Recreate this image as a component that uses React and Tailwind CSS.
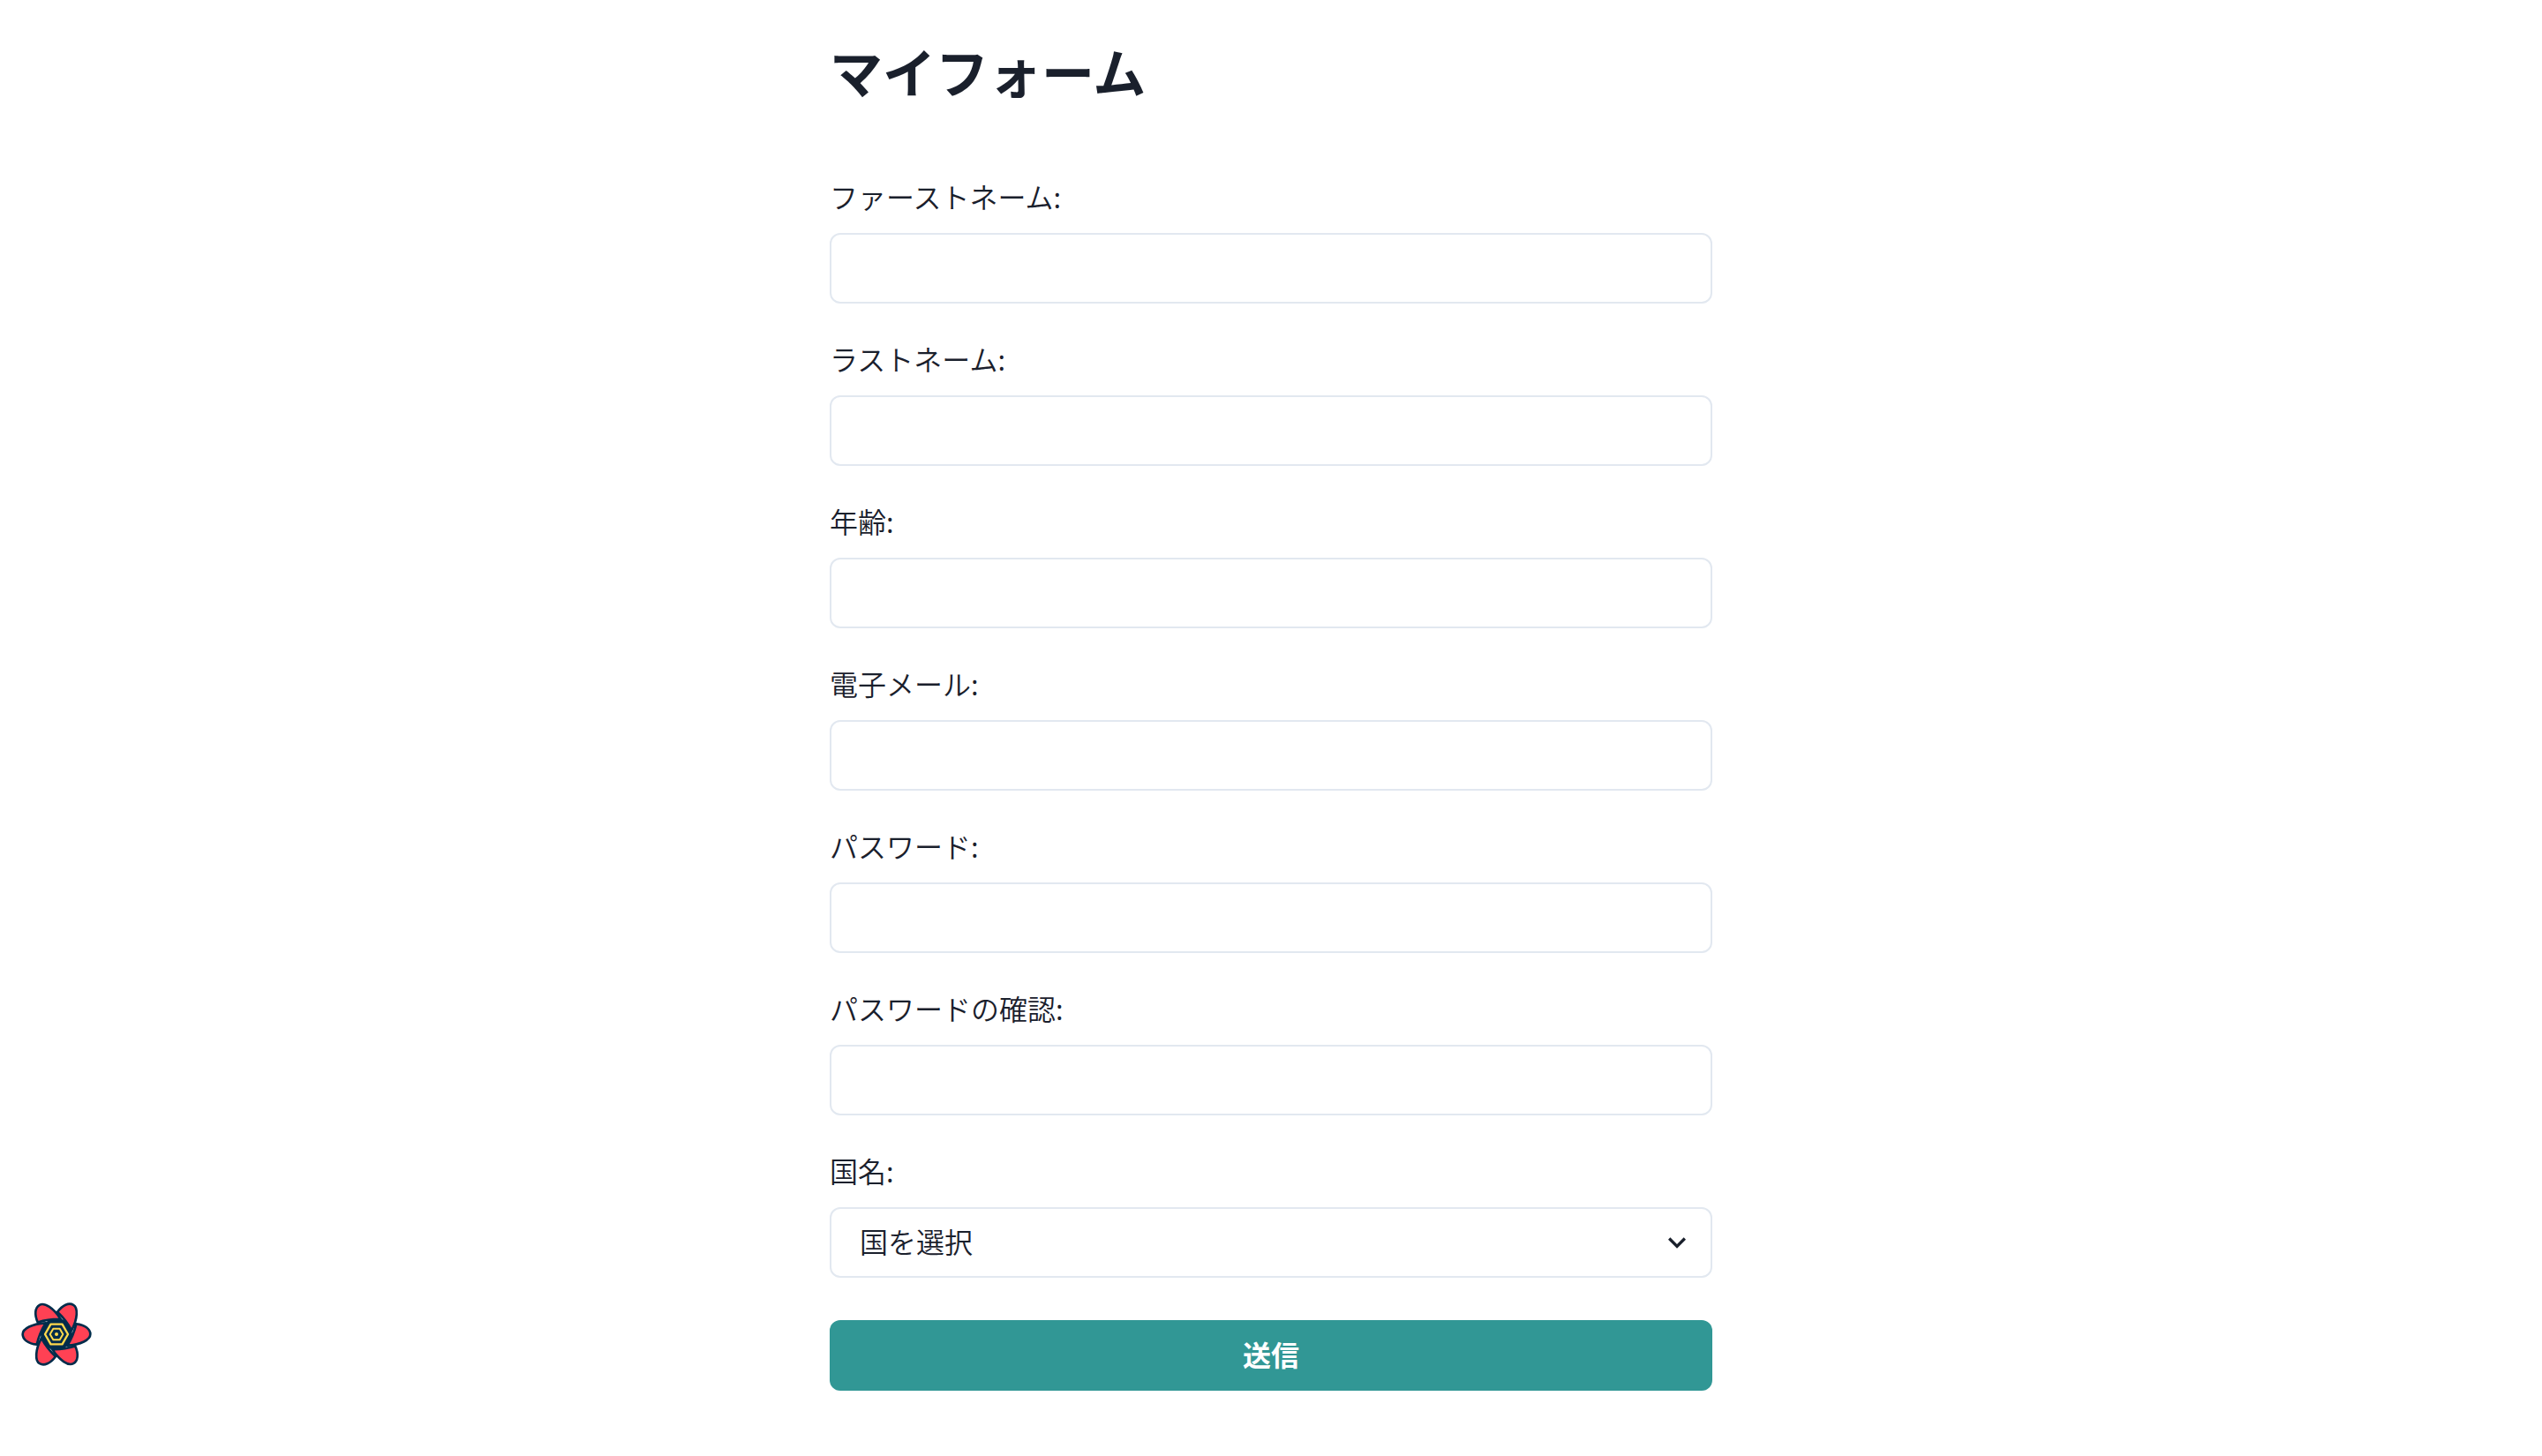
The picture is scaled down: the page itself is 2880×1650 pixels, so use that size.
const fields = [
  { id: 'firstName', label: 'ファーストネーム:', type: 'text' },
  { id: 'lastName', label: 'ラストネーム:', type: 'text' },
  { id: 'age', label: '年齢:', type: 'number' },
  { id: 'email', label: '電子メール:', type: 'email' },
  { id: 'password', label: 'パスワード:', type: 'password' },
  { id: 'passwordConfirm', label: 'パスワードの確認:', type: 'password' },
];

function FlowerLogo() {
  return (
    <svg viewBox="-120 -120 240 240" className="size-20" aria-hidden="true">
      <circle r="54" fill="#002C4B" />
      <g fill="#FF4154" stroke="#002C4B" strokeWidth="8" strokeLinejoin="round">
        {[0, 60, 120, 180, 240, 300].map((angle) => (
          <path
            key={angle}
            d="M37 38Q58 4 67 -35C96 -32 115 -18 115 0C115 19 82 36 37 38Z"
            transform={`rotate(${angle})`}
          />
        ))}
      </g>
      <path d="M50 0L25 43.3H-25L-50 0L-25 -43.3H25Z" fill="#002C4B" />
      <g fill="none" stroke="#FFD94C" strokeLinejoin="round">
        <path d="M39 0L19.5 34H-19.5L-39 0L-19.5 -34H19.5Z" strokeWidth="7" />
        <path d="M22 0L11 19H-11L-22 0L-11 -19H11Z" strokeWidth="6" />
      </g>
      <circle r="6" fill="#FFD94C" />
    </svg>
  );
}

function Field({ id, label, children }) {
  return (
    <div className="flex flex-col gap-5">
      <label htmlFor={id} className="text-[32px] leading-[44px]">
        {label}
      </label>
      {children}
    </div>
  );
}

export default function App() {
  return (
    <div className="min-h-screen bg-white font-['Noto_Sans_CJK_JP',sans-serif] font-[350] text-[#1A202C]">
      <main className="mx-auto flex w-full max-w-[1000px] flex-col pt-11 pb-16">
        <h1 className="mb-21 text-[60px] leading-[72px] font-bold">マイフォーム</h1>
        <form className="flex flex-col gap-10" onSubmit={(e) => e.preventDefault()}>
          {fields.map((f) => (
            <Field key={f.id} id={f.id} label={f.label}>
              <input
                id={f.id}
                type={f.type}
                className="h-20 w-full rounded-xl border-2 border-[#E2E8F0] bg-white px-8 text-[32px] outline-none"
              />
            </Field>
          ))}
          <Field id="country" label="国名:">
            <div className="relative">
              <select
                id="country"
                defaultValue=""
                className="block h-20 w-full appearance-none rounded-xl border-2 border-[#E2E8F0] bg-white pr-16 pb-1 pl-8 text-[32px] outline-none"
              >
                <option value="">国を選択</option>
              </select>
              <svg
                viewBox="0 0 24 24"
                fill="currentColor"
                aria-hidden="true"
                className="pointer-events-none absolute inset-y-5 right-5 size-10"
              >
                <path d="M16.59 8.59L12 13.17 7.41 8.59 6 10l6 6 6-6z" />
              </svg>
            </div>
          </Field>
          <button
            type="submit"
            className="mt-2 h-20 w-full rounded-xl bg-[#319795] pb-1 text-[32px] font-semibold text-white"
          >
            送信
          </button>
        </form>
      </main>
      <button type="button" aria-label="Open React Query Devtools" className="fixed bottom-[98px] left-6">
        <FlowerLogo />
      </button>
    </div>
  );
}
